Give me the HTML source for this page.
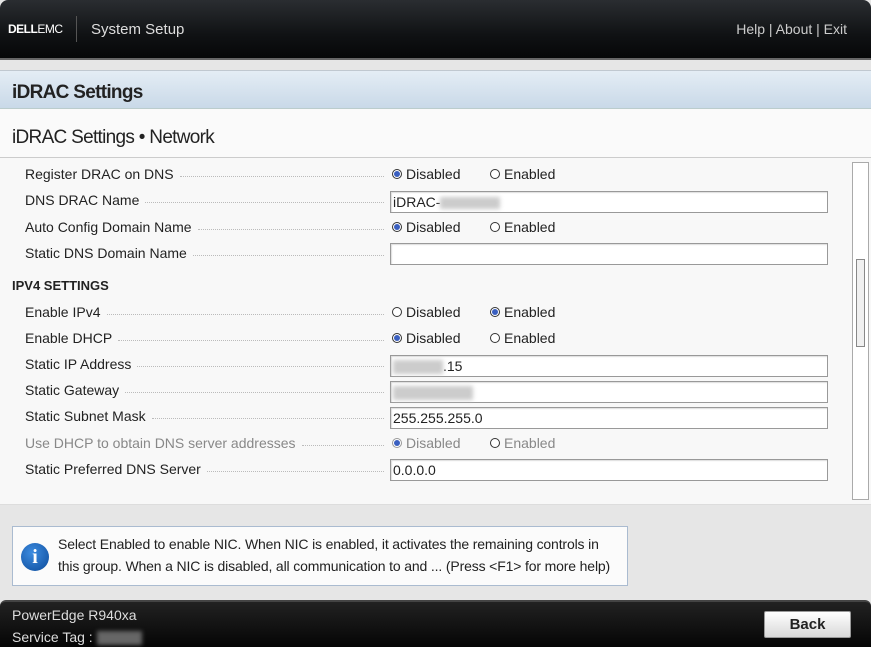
<!DOCTYPE html>
<html><head><style>
*{margin:0;padding:0;box-sizing:border-box}
body{width:871px;height:647px;overflow:hidden;background:#e6e6e6;font-family:"Liberation Sans",sans-serif;position:relative;color:#222}
.hdr{position:absolute;left:0;top:0;width:871px;height:60px;background:linear-gradient(#2a2d31,#101214 60%,#060708);border-radius:8px 8px 0 0;border-bottom:2px solid #666}
.logo{position:absolute;left:8px;top:22px;color:#fff;font-size:12px;font-weight:bold;letter-spacing:-0.5px}
.logo span{font-weight:normal}
.sep{position:absolute;left:76px;top:16px;width:1px;height:26px;background:#555}
.sys{position:absolute;left:91px;top:21px;color:#ddd;font-size:15px}
.links{position:absolute;right:24px;top:21px;color:#ccc;font-size:14px}
.title{position:absolute;left:0;top:70px;width:871px;height:39px;background:linear-gradient(#e4edf5,#c9d9e8);border-top:1px solid #c0c8d0;border-bottom:1px solid #bcc;font-weight:bold;font-size:19px;padding:11px 12px;letter-spacing:-0.7px}
.sub{position:absolute;left:0;top:109px;width:871px;height:49px;background:#fafafa;border-bottom:1px solid #ccc;font-size:19px;padding:18px 12px;letter-spacing:-0.7px}
.content{position:absolute;left:0;top:158px;width:871px;height:347px;background:#f8f8f8;border-bottom:1px solid #ddd}
.row{position:absolute;left:25px;width:365px;font-size:14px;display:flex;align-items:center;height:20px}
.row .l{white-space:nowrap}
.row .d{flex:1;border-bottom:1px dotted #bbb;margin:0 6px;height:0;position:relative;top:2px}
.dis{color:#888}
.r{position:absolute;font-size:14px;display:flex;align-items:center;height:20px}
.rb{width:10px;height:10px;border:1px solid #333;border-radius:50%;margin-right:4px;position:relative;background:#fff}
.rb.on::after{content:"";position:absolute;left:1px;top:1px;width:6px;height:6px;border-radius:50%;background:#3a5fc0}
.in{position:absolute;left:390px;width:438px;height:22px;border:1px solid #999;background:#fff;font-size:14px;padding:2px 2px;box-shadow:inset 1px 1px 1px #ddd}
.h{position:absolute;left:12px;font-weight:bold;font-size:13px}
.sb{position:absolute;left:852px;top:162px;width:17px;height:338px;border:1px solid #aaa;background:#fff}
.th{position:absolute;left:3px;top:96px;width:9px;height:88px;border:1px solid #888;background:#f0f0f0}
.info{position:absolute;left:12px;top:526px;width:616px;height:60px;background:#fbfbfb;border:1px solid #aabbd0;font-size:14px;line-height:22px;padding:6px 0 0 45px;color:#222;letter-spacing:-0.15px}
.ic{position:absolute;left:8px;top:16px;width:28px;height:28px;border-radius:50%;background:radial-gradient(circle at 40% 35%,#3d8ce0,#0b4a9a);color:#fff;font-weight:bold;font-family:"Liberation Serif",serif;text-align:center;font-size:20px;line-height:28px}
.ftr{position:absolute;left:0;top:600px;width:871px;height:47px;background:linear-gradient(#222,#050505);color:#ddd;font-size:14px;border-top:2px solid #444;border-radius:6px 6px 0 0}
.back{position:absolute;left:764px;top:9px;width:87px;height:27px;background:linear-gradient(#fff,#d8d8d8);border:1px solid #999;border-radius:2px;color:#222;font-weight:bold;font-size:15px;text-align:center;line-height:25px}
.blur{display:inline-block;background:#ccc;filter:blur(2px);vertical-align:middle}
</style></head><body>
<div class="hdr"><div class="logo">DELL<span>EMC</span></div><div class="sep"></div><div class="sys">System Setup</div><div class="links">Help | About | Exit</div></div>
<div class="title">iDRAC Settings</div>
<div class="sub">iDRAC Settings • Network</div>
<div class="content">
<div class="row" style="top:6px"><span class="l">Register DRAC on DNS</span><span class="d"></span></div>
<div class="r" style="left:392px;top:6px"><span class="rb on"></span>Disabled</div><div class="r" style="left:490px;top:6px"><span class="rb"></span>Enabled</div>
<div class="row" style="top:32px"><span class="l">DNS DRAC Name</span><span class="d"></span></div>
<div class="in" style="top:33px">iDRAC-<span class="blur" style="width:60px;height:12px"></span></div>
<div class="row" style="top:59px"><span class="l">Auto Config Domain Name</span><span class="d"></span></div>
<div class="r" style="left:392px;top:59px"><span class="rb on"></span>Disabled</div><div class="r" style="left:490px;top:59px"><span class="rb"></span>Enabled</div>
<div class="row" style="top:85px"><span class="l">Static DNS Domain Name</span><span class="d"></span></div>
<div class="in" style="top:85px"></div>
<div class="h" style="top:120px">IPV4 SETTINGS</div>
<div class="row" style="top:144px"><span class="l">Enable IPv4</span><span class="d"></span></div>
<div class="r" style="left:392px;top:144px"><span class="rb"></span>Disabled</div><div class="r" style="left:490px;top:144px"><span class="rb on"></span>Enabled</div>
<div class="row" style="top:170px"><span class="l">Enable DHCP</span><span class="d"></span></div>
<div class="r" style="left:392px;top:170px"><span class="rb on"></span>Disabled</div><div class="r" style="left:490px;top:170px"><span class="rb"></span>Enabled</div>
<div class="row" style="top:196px"><span class="l">Static IP Address</span><span class="d"></span></div>
<div class="in" style="top:197px"><span class="blur" style="width:50px;height:14px"></span>.15</div>
<div class="row" style="top:222px"><span class="l">Static Gateway</span><span class="d"></span></div>
<div class="in" style="top:223px"><span class="blur" style="width:80px;height:14px"></span></div>
<div class="row" style="top:248px"><span class="l">Static Subnet Mask</span><span class="d"></span></div>
<div class="in" style="top:249px">255.255.255.0</div>
<div class="row dis" style="top:275px"><span class="l">Use DHCP to obtain DNS server addresses</span><span class="d"></span></div>
<div class="r dis" style="left:392px;top:275px"><span class="rb on" style="border-color:#999"></span>Disabled</div><div class="r dis" style="left:490px;top:275px"><span class="rb"></span>Enabled</div>
<div class="row" style="top:301px"><span class="l">Static Preferred DNS Server</span><span class="d"></span></div>
<div class="in" style="top:301px">0.0.0.0</div>
</div>
<div class="sb"><div class="th"></div></div>
<div class="info"><div class="ic">i</div>Select Enabled to enable NIC. When NIC is enabled, it activates the remaining controls in<br>this group. When a NIC is disabled, all communication to and ... (Press &lt;F1&gt; for more help)</div>
<div class="ftr"><div style="position:absolute;left:12px;top:5px">PowerEdge R940xa</div><div style="position:absolute;left:12px;top:27px">Service Tag : <span class="blur" style="width:45px;height:14px;background:#666"></span></div><div class="back">Back</div></div>
</body></html>
